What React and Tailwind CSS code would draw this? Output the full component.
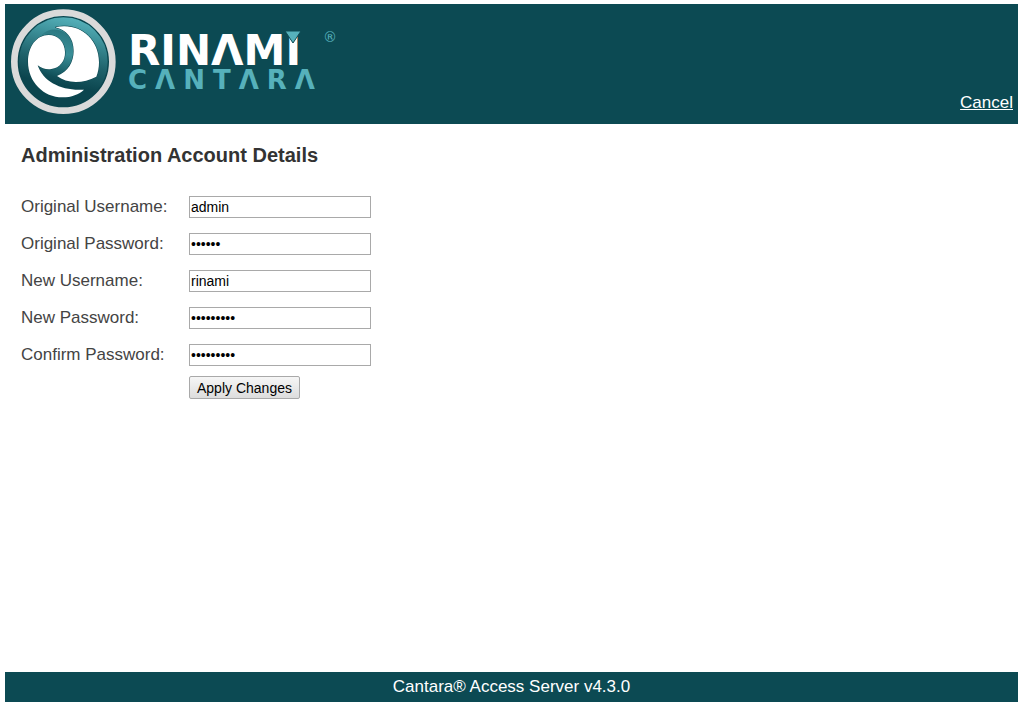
import { useState } from "react";

const fields = [
  { id: "originalUsername", label: "Original Username:", type: "text", value: "admin" },
  { id: "originalPassword", label: "Original Password:", type: "password", value: "secret" },
  { id: "newUsername", label: "New Username:", type: "text", value: "rinami" },
  { id: "newPassword", label: "New Password:", type: "password", value: "cantara43" },
  { id: "confirmPassword", label: "Confirm Password:", type: "password", value: "cantara43" },
];

function LogoMark() {
  return (
    <svg className="size-[105px] shrink-0" viewBox="33 28 315 315" aria-hidden="true">
      <defs>
        <linearGradient id="disc" x1="0.6" y1="0" x2="0.4" y2="1">
          <stop offset="0" stopColor="#58b4bd" />
          <stop offset="0.2" stopColor="#3f949d" />
          <stop offset="0.5" stopColor="#1f626b" />
          <stop offset="0.75" stopColor="#0b454e" />
          <stop offset="1" stopColor="#0b454e" />
        </linearGradient>
        <linearGradient id="curl" x1="0.5" y1="0" x2="0.3" y2="1">
          <stop offset="0" stopColor="#2b7881" />
          <stop offset="0.45" stopColor="#3a8f98" />
          <stop offset="1" stopColor="#0f4d56" />
        </linearGradient>
      </defs>
      <circle cx="190" cy="186" r="138" fill="url(#disc)" />
      <circle cx="190" cy="186" r="135" fill="none" stroke="#0b454e" strokeWidth="4" />
      <circle cx="190" cy="186" r="147" fill="none" stroke="#dadada" strokeWidth="20" />
      {/* band that curls between the two white shapes */}
      <path
        d="M122 108C150 78 196 86 214 120C232 156 216 206 172 229C148 232 124 218 113 197C150 218 196 202 196 156C194 112 150 96 122 108Z"
        fill="url(#curl)"
      />
      <path
        d="M113 197C126 207 140 210 154 208C180 205 196 183 195 157C194 128 174 106 146 106C110 106 84 140 84 186C84 246 130 293 188 293C214 293 237 284 252 270C188 275 130 248 113 197Z"
        fill="#fff"
        stroke="#0b454e"
        strokeWidth="3"
        paintOrder="stroke"
      />
      <path
        d="M166 83C232 66 297 112 297 188C297 204 294 219 289 231C248 253 200 252 171 229C205 215 221 187 221 153C221 116 200 91 166 83Z"
        fill="#fff"
        stroke="#0b454e"
        strokeWidth="3"
        paintOrder="stroke"
      />
    </svg>
  );
}

function Wordmark() {
  return (
    <div className="flex pt-6 font-['DejaVu_Sans',sans-serif] font-bold" role="img" aria-label="Rinami Cantara">
      <div>
        <div className="relative w-fit text-[42px] leading-9 text-white">
          RINΛMI
          <svg className="absolute -top-0.5 right-0 h-3 w-4" viewBox="0 0 16 12" aria-hidden="true">
            <path d="M0 0H16L8 12Z" fill="#56b1bb" stroke="#0c4a53" strokeWidth="1" />
          </svg>
        </div>
        <div className="text-[26px] leading-[22px] tracking-[8px] text-[#56b1bb]">CΛNTΛRΛ</div>
      </div>
      <span className="text-sm leading-2 font-normal text-[#56b1bb]">®</span>
    </div>
  );
}

export default function App() {
  const [values, setValues] = useState(() => Object.fromEntries(fields.map((f) => [f.id, f.value])));

  return (
    <div className="flex min-h-screen flex-col bg-white pt-1 pr-2 pb-[5px] pl-[5px] font-['Liberation_Sans',Arial,sans-serif] text-[17px] text-[#444]">
      <header className="flex items-end justify-between bg-[#0c4a53] pt-[5px] pr-[5px] pb-2.5 pl-1.5">
        <div className="flex gap-3">
          <LogoMark />
          <Wordmark />
        </div>
        <a href="#" className="leading-[22px] text-white underline">
          Cancel
        </a>
      </header>

      <main className="flex-1 px-4 pt-4">
        <h1 className="text-xl leading-[30px] font-bold text-[#333]">Administration Account Details</h1>

        <form className="mt-[26px]" onSubmit={(e) => e.preventDefault()}>
          <div className="grid grid-cols-[168px_1fr] items-center gap-y-[15px]">
            {fields.map((f) => (
              <div key={f.id} className="contents">
                <label htmlFor={f.id} className="leading-[22px]">
                  {f.label}
                </label>
                <input
                  id={f.id}
                  type={f.type}
                  value={values[f.id]}
                  onChange={(e) => setValues({ ...values, [f.id]: e.target.value })}
                  className="h-[22px] w-[182px] border border-[#a9a9a9] bg-white px-px text-sm text-black"
                />
              </div>
            ))}
          </div>
          <button
            type="submit"
            className="mt-2.5 ml-[168px] h-[23px] rounded-xs border border-[#a9a9a9] bg-linear-to-b from-[#f6f6f6] to-[#dddddd] px-[7px] text-sm leading-5 text-black"
          >
            Apply Changes
          </button>
        </form>
      </main>

      <footer className="bg-[#0c4a53] text-center leading-[30px] text-white">Cantara® Access Server v4.3.0</footer>
    </div>
  );
}
